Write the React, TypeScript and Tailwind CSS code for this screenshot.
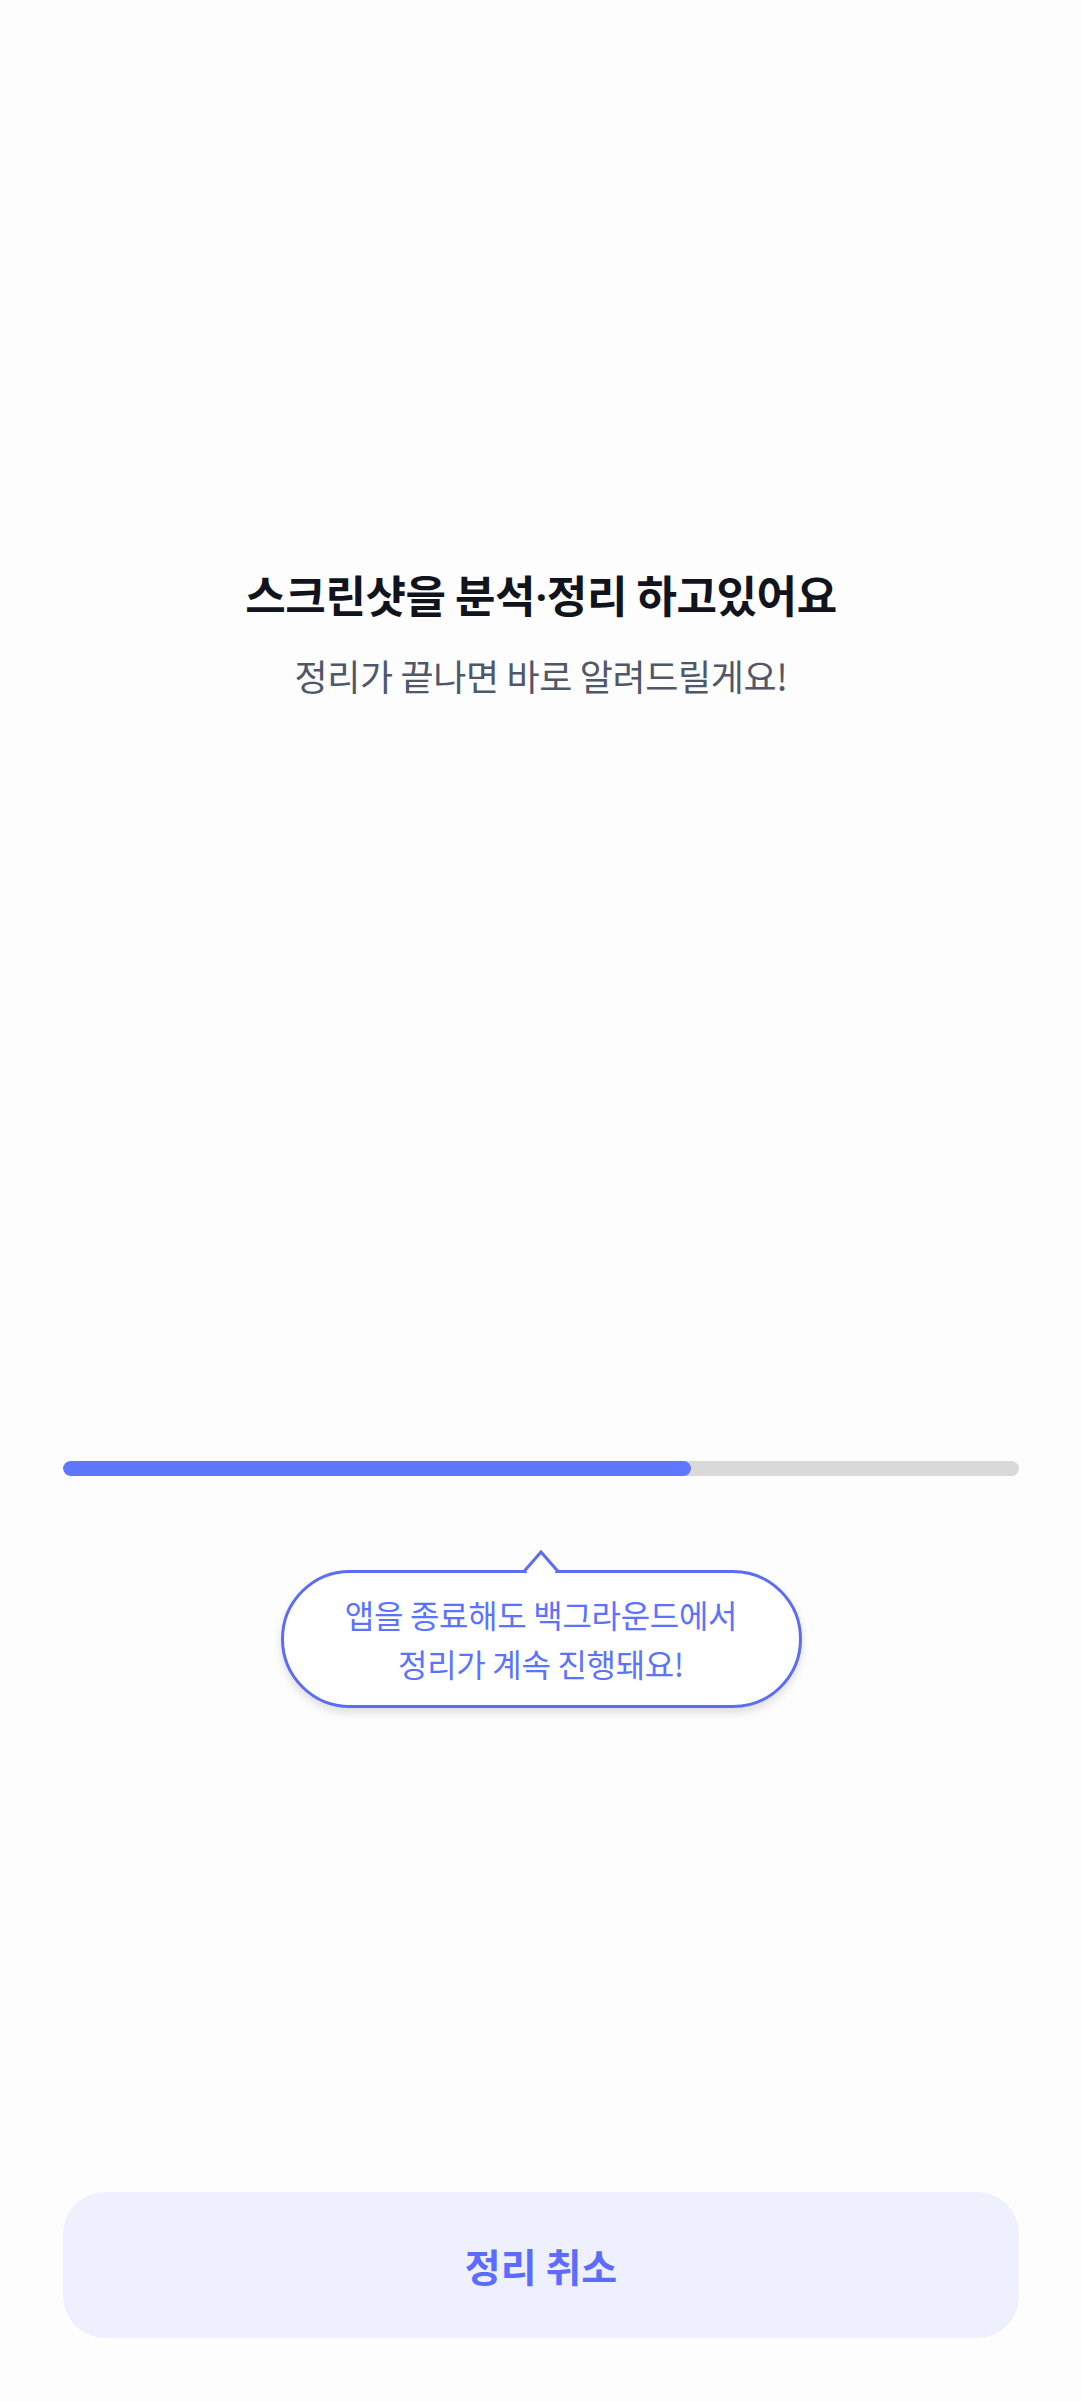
import React from 'react';

const font = { fontFamily: '"Noto Sans CJK KR", "Noto Sans", sans-serif' };

const App: React.FC = () => {
  const progress = 65.7;

  return (
    <div className="w-[1082px] h-[2402px] bg-[#fdfdfd] flex flex-col items-center" style={font}>
      {/* Header text */}
      <div className="mt-[566px] flex flex-col items-center">
        <h1 className="text-[44px] leading-[56px] font-semibold tracking-[-0.01em] text-[#11141c]">
          스크린샷을 분석<span className="font-['Noto_Sans']">·</span>정리 하고있어요
        </h1>
        <p className="mt-[27px] text-[36px] leading-[48px] tracking-[-0.01em] text-[#4f5769]">
          정리가 끝나면 바로 알려드릴게요!
        </p>
      </div>

      {/* Progress */}
      <div className="mt-[762px] w-[956px] h-[15px] rounded-full bg-[#d9d9d9] overflow-hidden">
        <div className="h-full rounded-full bg-[#5f76ff]" style={{ width: `${progress}%` }} />
      </div>

      {/* Tooltip bubble */}
      <div className="relative mt-[94px] w-[521px] h-[138px] rounded-full border-[3px] border-[#5b6cf5] bg-white shadow-[0_5px_8px_rgba(0,0,0,0.12)] flex items-center justify-center">
        <svg
          className="absolute left-1/2 -translate-x-1/2 top-[-23px]"
          width="36"
          height="26"
          viewBox="0 0 36 26"
        >
          <rect x="4" y="19" width="28" height="6" fill="#ffffff" />
          <path d="M1 21.5 L18 2 L35 21.5" fill="#ffffff" stroke="#5b6cf5" strokeWidth="3" strokeLinejoin="miter" />
        </svg>
        <p className="text-center text-[32px] leading-[49px] tracking-[-0.01em] text-[#5b73ff]">
          앱을 종료해도 백그라운드에서
          <br />
          정리가 계속 진행돼요!
        </p>
      </div>

      {/* Cancel button */}
      <div className="flex-1" />
      <button className="mb-[64px] w-[956px] h-[146px] rounded-[42px] bg-[#eef0fe] flex items-center justify-center">
        <span className="text-[39px] font-semibold text-[#5b6cff]">정리 취소</span>
      </button>
    </div>
  );
};

export default App;
